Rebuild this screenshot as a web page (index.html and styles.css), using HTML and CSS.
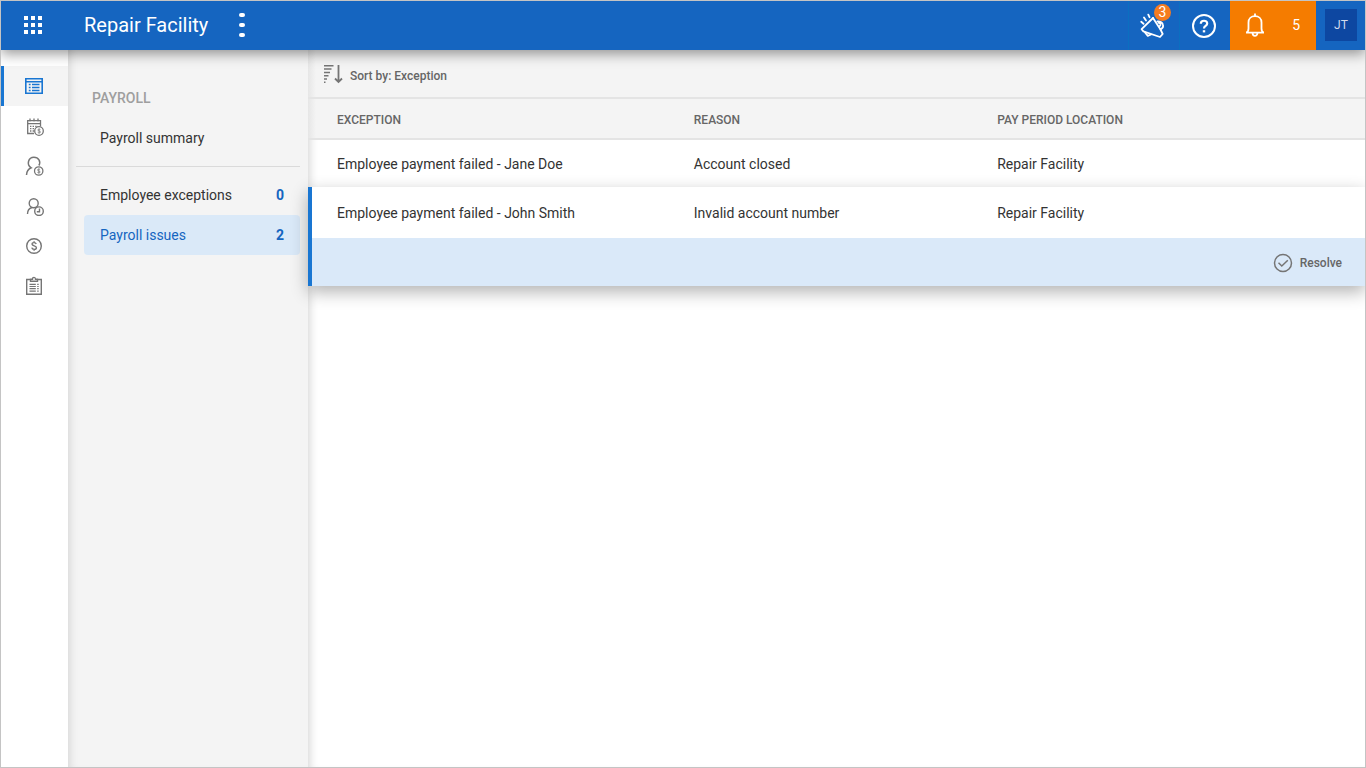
FILE: index.html
```html
<!DOCTYPE html>
<html lang="en">
<head>
    <meta charset="utf-8">
    <title>Payroll issues - Repair Facility</title>
    <link rel="stylesheet" href="styles.css">
</head>
<body>
    <header class="topbar">
        <button class="apps" type="button" aria-label="Apps">
            <svg width="18" height="18" viewBox="0 0 18 18" fill="#fff">
                <path d="M0 0h4v4H0zM7 0h4v4H7zM14 0h4v4h-4zM0 7h4v4H0zM7 7h4v4H7zM14 7h4v4h-4zM0 14h4v4H0zM7 14h4v4H7zM14 14h4v4h-4z"/>
            </svg>
        </button>
        <h1 class="title">Repair Facility</h1>
        <button class="more" type="button" aria-label="More">
            <svg width="6" height="26" viewBox="0 0 6 26" fill="#fff">
                <rect x="0" y="1" width="6" height="4" rx="2"/>
                <rect x="0" y="11" width="6" height="4" rx="2"/>
                <rect x="0" y="21" width="6" height="4" rx="2"/>
            </svg>
        </button>

        <div class="tools">
            <button class="tool" type="button" aria-label="Announcements">
                <svg width="26" height="26" viewBox="0 0 26 26" fill="none" stroke="#fff" stroke-width="1.8" stroke-linejoin="round" stroke-linecap="round">
                    <path d="M13 5 1.600 16.200l1.800 2.200 16.600 5.600 2.700-3-2.200-4.500"/>
                    <path d="M13 5l7.500 11.500c2.500-1.300 3-3.300 2.300-5.200-.6-1.800-2.400-3.200-5.300-3M18.600 9.800c2.200-.2 2.600 2.800.8 3.400"/>
                    <path d="M5 19.500l2.800 3.300 3.200-1.300"/>
                    <path d="M1.200 8.800l2.300 2M4 4.500l2 3M8.300 1.600l1.200 2.600"/>
                </svg>
                <span class="badge">3</span>
            </button>
            <button class="tool" type="button" aria-label="Help">
                <svg width="24" height="24" viewBox="0 0 24 24" fill="none" stroke="#fff" stroke-width="2">
                    <circle cx="12" cy="12" r="11"/>
                    <path d="M8.800 9.800c0-4 6.400-4 6.400-.2 0 2.300-3.200 2.400-3.200 4.800" stroke-width="2.200"/>
                    <path d="M12 16.200v2.200" stroke-width="2.400"/>
                </svg>
            </button>
            <button class="alerts" type="button" aria-label="Notifications, 5">
                <svg width="20" height="24" viewBox="0 0 20 24" fill="none" stroke="#fff" stroke-width="1.8">
                    <path d="M1 19.600h18M1.400 19.400c1.800-.7 2.100-2 2.100-4V9.500c0-3.800 2.700-6.300 6.500-6.300s6.500 2.500 6.500 6.300v5.900c0 2 .3 3.300 2.100 4"/>
                    <path d="M10 .5v3M7.600 20c0 3.800 4.800 3.800 4.800 0"/>
                </svg>
                <span class="alert-count">5</span>
            </button>
            <button class="avatar" type="button">JT</button>
        </div>
    </header>

    <div class="layout">
        <nav class="rail" aria-label="Sections">
            <a class="rail-link active" href="#payroll" aria-label="Payroll">
                <svg width="18" height="18" viewBox="0 0 18 18" fill="none" stroke="#1976d2" stroke-width="1.6">
                    <path d="M.8 1.800h16.400v14.400H.8zM.8 4.800h16.400"/>
                    <path d="M3.800 7.500h1.800M7 7.500h7.500M3.800 10.500h1.800M7 10.500h7.500M3.800 13.500h1.800M7 13.500h7.500" stroke-width="1.4"/>
                </svg>
            </a>
            <a class="rail-link" href="#pay-periods" aria-label="Pay periods">
                <svg width="20" height="20" viewBox="0 0 20 20" fill="none" stroke="#757575" stroke-width="1.300">
                    <path d="M10 17.500H3.700V4.600h12.800V10M3.700 7.600h12.800M6 2.600v3M10 2.600v3M14 2.600v3"/>
                    <path d="M6 10.400h8M6 12.700h4.500M6 15h4" stroke-dasharray="1.400 1.200"/>
                    <circle cx="15" cy="15" r="4.300"/>
                    <path d="M16.400 13.600c-.7-.8-2.600-.7-2.600.4 0 1.300 2.700.7 2.700 2 0 1.100-2 1.200-2.800.3M15.100 12.600v4.900" stroke-width=".8"/>
                </svg>
            </a>
            <a class="rail-link" href="#employee-pay" aria-label="Employee pay">
                <svg width="20" height="20" viewBox="0 0 20 20" fill="none" stroke="#757575" stroke-width="1.500">
                    <path d="M2.500 19c.2-3.700 1.700-6 4.700-7.200-5.200-3.400-2.700-10.600 2.700-10.600 4.700 0 7.200 4.600 5 8.300"/>
                    <circle cx="14.700" cy="15" r="4.200" stroke-width="1.300"/>
                    <path d="M16.100 13.600c-.7-.8-2.600-.7-2.600.4 0 1.300 2.700.7 2.700 2 0 1.100-2 1.200-2.800.3M14.800 12.600v4.900" stroke-width=".8"/>
                </svg>
            </a>
            <a class="rail-link" href="#employee-time" aria-label="Employee time">
                <svg width="20" height="20" viewBox="0 0 20 20" fill="none" stroke="#757575" stroke-width="1.400">
                    <circle cx="9.700" cy="7.300" r="4.500"/>
                    <path d="M3.500 18c0-3.500 1.600-5.600 4.500-6.500"/>
                    <circle cx="15" cy="15.200" r="4.300" fill="#fff"/>
                    <path d="M15.500 12.500v3.200h-2.700"/>
                </svg>
            </a>
            <a class="rail-link" href="#payments" aria-label="Payments">
                <svg width="18" height="18" viewBox="0 0 18 18" fill="none" stroke="#757575" stroke-width="1.400">
                    <circle cx="9" cy="9" r="7.300"/>
                    <path d="M11.200 7C10.600 5 7 5.200 7 7.100c0 2.300 4.400 1.400 4.400 3.700 0 2.100-4.200 2.200-4.600-.1M9.100 4.300v1.500M9.100 12.200v1.500"/>
                </svg>
            </a>
            <a class="rail-link" href="#reports" aria-label="Reports">
                <svg width="18" height="20" viewBox="0 0 18 20" fill="none" stroke="#757575" stroke-width="1.400">
                    <path d="M5.500 3.500H1.700v14.800h14.600V3.500h-3.800M5.500 5.200V3.200h2c0-2.500 3-2.500 3 0h2v2z"/>
                    <path d="M4.500 8.300h6.300M4.500 10.500h6.300M4.500 12.700h6.300M4.500 15.200h6.300M12.200 8.300h1.500M12.200 10.500h1.500M12.200 12.700h1.500M12.200 15.200h1.500" stroke-width="1.200"/>
                </svg>
            </a>
        </nav>

        <nav class="sidebar" aria-label="Payroll">
            <h2 class="sidebar-title">PAYROLL</h2>
            <a class="item" href="#summary">Payroll summary</a>
            <hr class="divider">
            <a class="item" href="#exceptions">Employee exceptions <span class="count">0</span></a>
            <a class="item selected" href="#issues">Payroll issues <span class="count">2</span></a>
        </nav>

        <main class="content">
            <div class="sortbar">
                <button class="sort" type="button">
                    <svg width="20" height="20" viewBox="0 0 20 20" fill="none" stroke="#757575" stroke-width="1.500">
                        <path d="M1 1.800h9.500M1 5.100h7.500M1 8.400h6M1 11.700h4.500M1 15h3M1 18.200h1.500"/>
                        <path d="M15.500 1v17M12 14.500l3.500 3.500 3.500-3.500" stroke-width="1.800"/>
                    </svg>
                    Sort by: Exception
                </button>
            </div>

            <table class="issues">
                <thead>
                    <tr>
                        <th class="col-exception" scope="col">EXCEPTION</th>
                        <th class="col-reason" scope="col">REASON</th>
                        <th scope="col">PAY PERIOD LOCATION</th>
                    </tr>
                </thead>
                <tbody>
                    <tr>
                        <td>Employee payment failed - Jane Doe</td>
                        <td>Account closed</td>
                        <td>Repair Facility</td>
                    </tr>
                </tbody>
                <tbody class="open">
                    <tr>
                        <td>Employee payment failed - John Smith</td>
                        <td>Invalid account number</td>
                        <td>Repair Facility</td>
                    </tr>
                    <tr class="actions">
                        <td colspan="3">
                            <button class="resolve" type="button">
                                <svg width="20" height="20" viewBox="0 0 20 20" fill="none" stroke="#757575" stroke-width="1.500">
                                    <circle cx="10" cy="10" r="8.500"/>
                                    <path d="M5.500 9.800l3.300 3.200 6-5.800"/>
                                </svg>
                                Resolve
                            </button>
                        </td>
                    </tr>
                </tbody>
            </table>
        </main>
    </div>
</body>
</html>
```
FILE: styles.css
```css
* {
    box-sizing: border-box;
}

body {
    display: flex;
    flex-direction: column;
    min-height: 100vh;
    margin: 0;
    border: 1px solid #c4c4c4;
    font-family: Roboto, sans-serif;
    font-size: 14px;
    color: #333;
    background: #fff;
}

button {
    display: flex;
    align-items: center;
    padding: 0;
    border: 0;
    background: none;
    font-family: inherit;
    color: inherit;
    cursor: pointer;
}

a {
    color: inherit;
    text-decoration: none;
}

svg {
    flex: none;
}

/* top bar */
.topbar {
    position: relative;
    z-index: 3;
    display: flex;
    align-items: center;
    height: 49px;
    padding-bottom: 1px;
    color: #fff;
    background: #1565c0;
    background-clip: border-box;
    box-shadow: 0 4px 12px rgba(0, 0, 0, 0.4);
}

.apps {
    margin-left: 23px;
}

.title {
    margin: 0 27px 0 42px;
    font-size: 20px;
    font-weight: 400;
}

.more {
    padding: 0 4px;
}

.tools {
    display: flex;
    align-items: center;
    height: 49px;
    margin-left: auto;
}

.tool {
    position: relative;
    justify-content: center;
    align-self: stretch;
    width: 51px;
    padding: 2px 2px 0 0;
    border-left: 1px solid #0b6fc0;
}

.badge {
    position: absolute;
    top: 3px;
    right: 8px;
    width: 17px;
    border-radius: 50%;
    font-size: 14px;
    line-height: 17px;
    text-align: center;
    background: #f57c20;
}

.alerts {
    justify-content: space-between;
    align-self: stretch;
    width: 86px;
    padding: 0 16px 0 15px;
    background: #f57c00;
}

.alert-count {
    font-size: 14px;
}

.avatar {
    justify-content: center;
    width: 32px;
    height: 32px;
    margin: 0 8px 0 9px;
    font-size: 12px;
    color: #d3dced;
    background: #0d47a1;
}

.layout {
    display: flex;
    flex: 1;
}

/* icon rail */
.rail {
    flex: none;
    width: 67px;
    padding-top: 16px;
}

.rail-link {
    display: flex;
    align-items: center;
    justify-content: center;
    height: 40px;
    padding-right: 2px;
}

.rail-link.active {
    border-left: 3px solid #1976d2;
    padding-right: 4px;
    background: #f4f4f4;
}

/* payroll menu */
.sidebar {
    flex: none;
    width: 240px;
    padding: 36px 8px;
    background: #f4f4f4;
    box-shadow: inset 8px 0 8px -6px rgba(0, 0, 0, 0.12);
}

.sidebar-title {
    margin: 0 0 8px 16px;
    font-size: 14px;
    font-weight: 500;
    line-height: 24px;
    color: #9e9e9e;
}

.item {
    display: flex;
    align-items: center;
    justify-content: space-between;
    height: 40px;
    margin-left: 8px;
    padding: 0 16px;
    border-radius: 4px;
}

.item.selected {
    color: #1565c0;
    background: #dae9f8;
}

.divider {
    margin: 8px 0;
    border: 0;
    border-top: 1px solid #dadada;
}

.count {
    font-weight: 700;
    color: #1565c0;
}

/* issues list */
.content {
    flex: 1;
    box-shadow: inset 8px 0 8px -6px rgba(0, 0, 0, 0.16);
}

.sortbar {
    display: flex;
    align-items: center;
    height: 49px;
    padding-left: 15px;
    border-bottom: 2px solid #e4e4e4;
    background: linear-gradient(to right, #e6e6e6, #f4f4f4 8px);
}

.sort,
.resolve {
    gap: 7px;
    font-size: 12px;
    font-weight: 500;
    line-height: 16px;
    color: #666;
}

.sort {
    align-items: flex-end;
}

.issues {
    width: 100%;
    border-spacing: 0;
    table-layout: fixed;
}

.issues th {
    height: 41px;
    padding: 2px 0 0;
    border-bottom: 2px solid #e4e4e4;
    font-size: 12px;
    font-weight: 500;
    text-align: left;
    color: #666;
    background: #f4f4f4;
}

.issues td {
    height: 47px;
    padding: 1px 0 0;
}

.issues th:first-child,
.issues td:first-child {
    padding-left: 29px;
}

.issues th:first-child {
    background: linear-gradient(to right, #e6e6e6, #f4f4f4 8px);
}

.col-exception {
    width: 36.5%;
}

.col-reason {
    width: 28.7%;
}

.issues .open {
    position: relative;
    z-index: 2;
    background: #fff;
    box-shadow: 0 6px 16px rgba(0, 0, 0, 0.3);
}

.issues .open td {
    height: 51px;
}

.issues .open td:first-child {
    padding-left: 25px;
    border-left: 4px solid #1976d2;
}

.issues .actions td {
    height: 48px;
    padding-right: 23px;
    background: #dae9f9;
}

.resolve {
    margin-left: auto;
}
```
